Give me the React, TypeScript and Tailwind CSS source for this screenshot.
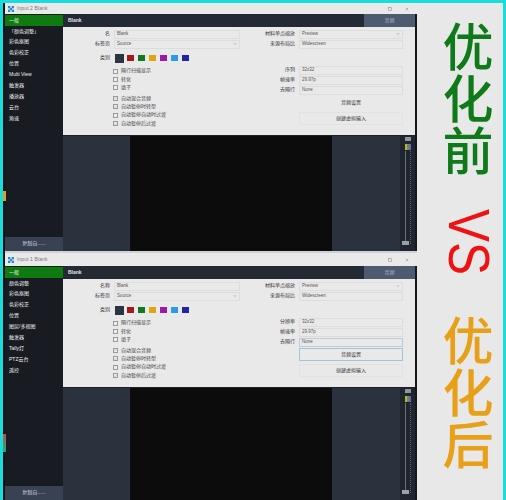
import { FiX, FiSquare, FiChevronDown, FiCheck } from "react-icons/fi";

const cjk = "font-['Liberation_Sans','Noto_Sans_CJK_SC',sans-serif]";
const swatches = ["bg-[#a81818]", "bg-[#0d7a1c]", "bg-[#e0a412]", "bg-[#9c17ad]", "bg-[#2a9be8]", "bg-[#24249c]"];

function Field({ label, value, chevron, active, labelClass }: { label: string; value: string; chevron?: boolean; active?: boolean; labelClass: string }) {
    return (
        <div className="flex items-center h-[10px]">
            <span className={`${labelClass} pr-[4px] text-right text-[5px] text-[#333]`}>{label}</span>
            <div className={`flex-1 h-[9px] flex items-center justify-between px-[2px] text-[4.5px] text-[#555] ${active ? "border border-[#bcd]" : "border border-[#ddd]"}`}>
                <span>{value}</span>
                {chevron && <FiChevronDown className="w-[4px] h-[4px]" />}
            </div>
        </div>
    );
}

function Check({ label, checked, className }: { label: string; checked?: boolean; className?: string }) {
    return (
        <div className={`flex items-center gap-[3px] h-[8.4px] ${className ?? ""}`}>
            <span className="w-[5px] h-[5px] border border-[#999] bg-[#eee] flex items-center justify-center">
                {checked && <FiCheck className="w-[4px] h-[4px] text-[#555]" />}
            </span>
            <span className="text-[5px] text-[#444]">{label}</span>
        </div>
    );
}

type WindowProps = {
    title: string;
    nav: string[];
    nameLabel: string;
    resLabel: string;
    highlight?: boolean;
    outerClass: string;
    titleClass: string;
};

function InputWindow({ title, nav, nameLabel, resLabel, highlight, outerClass, titleClass }: WindowProps) {
    return (
        <div className={`flex flex-col ${outerClass}`}>
            {/* Title bar */}
            <div className={`flex items-center bg-[#e9e9e9] pl-[3px] pr-[8px] shrink-0 ${titleClass}`}>
                <div className="grid grid-cols-[2px_2px_2px] grid-rows-[2px_2px_2px] mr-[3px] shrink-0">
                    {Array.from({ length: 9 }).map((_, i) => (
                        <span key={i} className={i % 2 === 0 ? "bg-[#2f86c0]" : "bg-[#9fd0e6]"} />
                    ))}
                </div>
                <span className="text-[5px] text-[#777] tracking-[0.1px]">{title}</span>
                <FiSquare className="ml-auto w-[4px] h-[4px] text-[#555]" />
                <FiX className="ml-[13px] w-[4px] h-[4px] text-[#555]" />
            </div>

            <div className="flex flex-1 min-h-0">
                {/* Sidebar */}
                <div className="w-[58px] shrink-0 bg-[#181b22] flex flex-col">
                    <div className="h-[1px]" />
                    {nav.map((item, i) => (
                        <div
                            key={item}
                            className={`h-[10.9px] flex items-center pl-[4px] text-[5px] text-[#f0f0f0] ${i === 0 ? "bg-[#0f7a0f]" : ""}`}
                        >
                            {item}
                        </div>
                    ))}
                    <div className="mt-auto h-[14px] bg-[#394252] flex items-center justify-center text-[5px] text-[#d8dce2]">
                        复制自......
                    </div>
                </div>

                {/* Main */}
                <div className="flex-1 flex flex-col min-w-0">
                    <div className="h-[13px] shrink-0 bg-[#232a33] flex items-center justify-between pl-[5px]">
                        <span className="text-[5px] font-bold text-[#e4e4e4]">Blank</span>
                        <span className="w-[51px] h-full bg-[#4d5a70] flex items-center justify-center text-[5px] text-[#aeb6c2]">音频</span>
                    </div>

                    <div className="h-[108px] shrink-0 bg-[#e9e9e9] flex pr-[12px]">
                        {/* Left column */}
                        <div className="w-[180px] shrink-0 pt-[2px] pr-[3px] flex flex-col">
                            <Field labelClass="w-[51px]" label={nameLabel} value="Blank" />
                            <Field labelClass="w-[51px]" label="标签页" value="Source" chevron />
                            <div className="flex items-center h-[14px] mt-[2px]">
                                <span className="w-[52px] pr-[5px] text-right text-[5px] text-[#333]">类别</span>
                                <span className="w-[9px] h-[9px] bg-[#2b3440] mr-[3px]" />
                                <div className="flex gap-[4.4px]">
                                    {swatches.map((c) => (
                                        <span key={c} className={`w-[6.6px] h-[6.6px] ${c}`} />
                                    ))}
                                </div>
                            </div>
                            <div className="pl-[50px] mt-[2px] flex flex-col">
                                <Check label="隔行扫描显示" />
                                <Check label="转化" />
                                <Check label="填子" />
                                <Check label="自动混合音频" checked className="mt-[2px]" />
                                <Check label="自动暂停时转型" checked />
                                <Check label="自动暂停自动时过渡" />
                                <Check label="自动暂停后过渡" checked />
                            </div>
                        </div>

                        {/* Right column */}
                        <div className="flex-1 pt-[2px] flex flex-col">
                            <Field labelClass="w-[56px]" label="材料单点缩放" value="Preview" chevron />
                            <Field labelClass="w-[56px]" label="来源布局比" value="Widescreen" />
                            <div className="h-[16px]" />
                            <Field labelClass="w-[56px]" label={resLabel} value="32x32" />
                            <Field labelClass="w-[56px]" label="帧速率" value="29.97p" />
                            <Field labelClass="w-[56px]" label="去隔行" value="None" active={highlight} />
                            <div className="pl-[56px] mt-[1px]">
                                <div className={`h-[13px] flex items-center justify-center text-[5px] text-[#333] ${highlight ? "border border-[#9cc8d8]" : ""}`}>
                                    音频设置
                                </div>
                                <div className="mt-[3px] h-[13px] border border-[#e2e2e2] flex items-center justify-center text-[5px] text-[#333]">
                                    创建虚拟输入
                                </div>
                            </div>
                        </div>
                    </div>

                    {/* Preview area */}
                    <div className="flex-1 flex min-h-0 bg-[#2b323d] border-t border-[#1d2026]">
                        <div className="w-[67px] shrink-0" />
                        <div className="w-[202px] shrink-0 bg-[#0c0c0c]" />
                        <div className="flex-1" />
                        <div className="w-[15px] shrink-0 bg-[#20262f] flex flex-col items-center pt-[1px] relative">
                            <span className="w-[6px] h-[4px] bg-[#8f949b]" />
                            <span className="w-[6px] h-[6px] mt-[3px] bg-[linear-gradient(90deg,#d9a520_33%,#3f9f5f_33%,#3f9f5f_66%,#7a5fc0_66%)]" />
                            <div className="flex-1 flex justify-center gap-[4px] mt-[1px] mb-[1px] w-full">
                                <span className="w-[1px] bg-[#6a7280]" />
                                <span className="w-[1px] border-l border-dotted border-[#5a616c]" />
                            </div>
                            <span className="absolute bottom-[6px] left-[2px] w-[7px] h-[4px] bg-[#9aa0a8]" />
                            <span className="h-[6px]" />
                        </div>
                    </div>
                </div>
                <div className="w-[2px] bg-[#15171b] shrink-0" />
            </div>
        </div>
    );
}

export default function App() {
    return (
        <div className={`relative w-[506px] h-[500px] bg-[#14161b] overflow-hidden flex flex-col ${cjk}`}>
            <div className="h-[3px] bg-[#19dcdc] shrink-0" />
            <div className="flex flex-1 min-h-0">
                <div className="w-[3px] bg-[#19dcdc] shrink-0" />
                <div className="w-[2px] bg-[#101216] shrink-0" />

                <div className="w-[412px] shrink-0 flex flex-col">
                    <InputWindow
                        title="Input 2 Blank"
                        nav={["一般", "「颜色调整」", "彩色抠图", "色彩校正", "位置", "Multi View", "触发器", "播放器", "云台", "角速"]}
                        nameLabel="名"
                        resLabel="序列"
                        outerClass="h-[248px]"
                        titleClass="h-[11px]"
                    />
                    <InputWindow
                        title="Input 1 Blank"
                        nav={["一般", "颜色调整", "彩色抠图", "色彩校正", "位置", "图层/多视图", "触发器", "Tally灯", "PTZ云台", "遥控"]}
                        nameLabel="名称"
                        resLabel="分辨率"
                        highlight
                        outerClass="flex-1 min-h-0"
                        titleClass="h-[15px] border-t-2 border-[#cfd3d8]"
                    />
                </div>

                {/* Comparison labels */}
                <div className="flex-1 bg-[#e8e8e8] flex flex-col items-center pl-[16px] font-['Noto_Sans_CJK_SC',sans-serif]">
                    <div className="mt-[18px] h-[156px] text-[51px] leading-[56px] tracking-[1px] font-medium text-[#0f7a1a] [writing-mode:vertical-rl]">
                        优化前
                    </div>
                    <div className="mt-[32px] h-[66px] flex items-center justify-center">
                        <div className="text-[57px] leading-[57px] text-[#ee1212] font-['Liberation_Sans',sans-serif] [writing-mode:vertical-rl] scale-y-[0.87]">VS</div>
                    </div>
                    <div className="mt-[40px] h-[156px] text-[51px] leading-[56px] tracking-[1px] font-medium text-[#e8a018] [writing-mode:vertical-rl]">
                        优化后
                    </div>
                </div>
                <div className="w-[3px] bg-[#19dcdc] shrink-0" />
            </div>

            {/* Stray colour marks on the left edge */}
            <span className="absolute left-[3px] top-[191px] w-[3px] h-[10px] bg-[#d9a030]" />
            <span className="absolute left-[3px] top-[434px] w-[3px] h-[18px] bg-[linear-gradient(180deg,#c05050,#18b070)]" />
        </div>
    );
}
